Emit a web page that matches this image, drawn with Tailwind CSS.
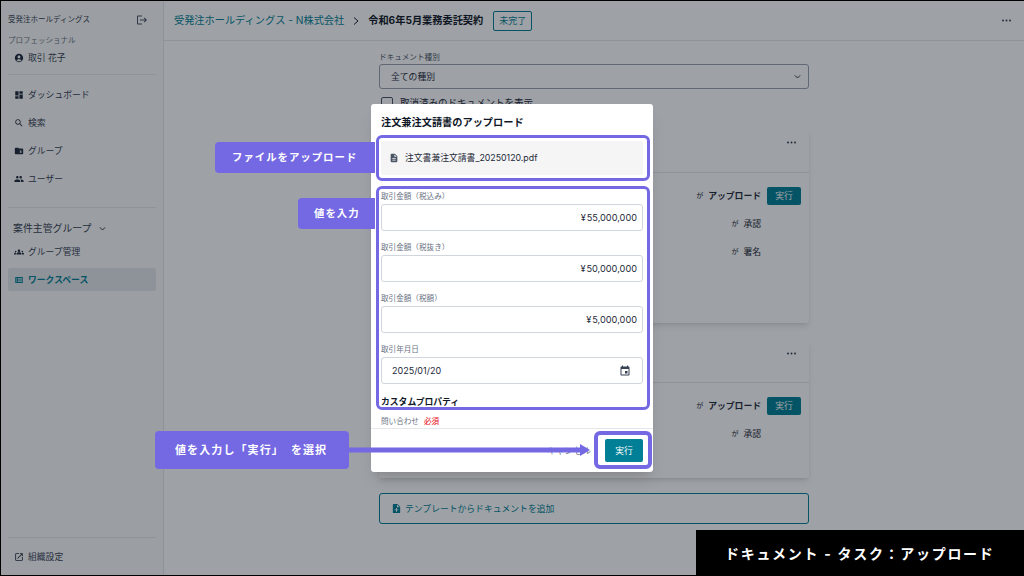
<!DOCTYPE html>
<html lang="ja">
<head>
    <meta charset="UTF-8">
    <title>ドキュメント - タスク：アップロード</title>
    <script src="https://cdn.jsdelivr.net/npm/@tailwindcss/browser@4"></script>
</head>
<body class="bg-black w-[1024px] h-[576px] overflow-hidden font-['Inter','Noto_Sans_CJK_JP',sans-serif] text-gray-800">
<div class="relative ml-[1px] mt-[1px] w-[1023px] h-[574px] bg-white flex overflow-hidden">

    <!-- サイドバー -->
    <aside class="w-[163px] shrink-0 bg-[#fbfbfb] border-r border-gray-200 flex flex-col px-[7px] text-[8.8px] text-gray-700">
        <div class="flex justify-between items-center h-[36px] pt-[1px] pr-[8px] text-[7.5px]">
            <span>受発注ホールディングス</span>
            <svg class="w-[12px] h-[12px] fill-gray-600" viewBox="0 0 24 24"><path d="M17 7l-1.41 1.41L18.17 11H8v2h10.17l-2.58 2.58L17 17l5-5zM4 5h8V3H4c-1.1 0-2 .9-2 2v14c0 1.1.9 2 2 2h8v-2H4V5z"/></svg>
        </div>
        <div class="text-[7.5px] text-gray-500 leading-[10px] mt-[-1px]">プロフェッショナル</div>
        <div class="flex items-center gap-[4px] px-[6px] border-b border-gray-200 pb-[5px] h-[29px]">
            <svg class="w-[10px] h-[10px] fill-gray-800" viewBox="0 0 24 24"><path d="M12 2C6.48 2 2 6.48 2 12s4.48 10 10 10 10-4.48 10-10S17.52 2 12 2zm0 4c1.93 0 3.5 1.57 3.5 3.5S13.93 13 12 13s-3.5-1.57-3.5-3.5S10.07 6 12 6zm0 14c-2.03 0-4.43-.82-6.14-2.88C7.55 15.8 9.68 15 12 15s4.45.8 6.14 2.12C16.43 19.18 14.03 20 12 20z"/></svg>
            <span>取引 花子</span>
        </div>
        <div class="mt-[6px] flex flex-col border-b border-gray-200 pb-[14px]">
            <div class="flex items-center gap-[4px] h-[28px] px-[6px]">
                <svg class="w-[10px] h-[10px] fill-gray-800" viewBox="0 0 24 24"><path d="M3 13h8V3H3v10zm0 8h8v-6H3v6zm10 0h8V11h-8v10zm0-18v6h8V3h-8z"/></svg>
                <span>ダッシュボード</span>
            </div>
            <div class="flex items-center gap-[4px] h-[28px] px-[6px]">
                <svg class="w-[10px] h-[10px] fill-gray-800" viewBox="0 0 24 24"><path d="M15.5 14h-.79l-.28-.27C15.41 12.59 16 11.11 16 9.5 16 5.91 13.09 3 9.5 3S3 5.91 3 9.5 5.91 16 9.5 16c1.61 0 3.09-.59 4.23-1.57l.27.28v.79l5 4.99L20.49 19l-4.99-5zm-6 0C7.01 14 5 11.99 5 9.5S7.01 5 9.5 5 14 7.01 14 9.5 11.99 14 9.5 14z"/></svg>
                <span>検索</span>
            </div>
            <div class="flex items-center gap-[4px] h-[28px] px-[6px]">
                <svg class="w-[10px] h-[10px] fill-gray-800" viewBox="0 0 24 24"><path fill-rule="evenodd" d="M10 4H4c-1.1 0-2 .9-2 2v12c0 1.1.9 2 2 2h16c1.1 0 2-.9 2-2V8c0-1.1-.9-2-2-2h-8l-2-2zm4 7h4v2h-4zm0 3h4v2h-4z"/></svg>
                <span>グループ</span>
            </div>
            <div class="flex items-center gap-[4px] h-[28px] px-[6px]">
                <svg class="w-[10px] h-[10px] fill-gray-800" viewBox="0 0 24 24"><path d="M16 11c1.66 0 2.99-1.34 2.99-3S17.66 5 16 5c-1.66 0-3 1.34-3 3s1.34 3 3 3zm-8 0c1.66 0 2.99-1.34 2.99-3S9.66 5 8 5C6.34 5 5 6.34 5 8s1.34 3 3 3zm0 2c-2.33 0-7 1.17-7 3.5V19h14v-2.5c0-2.33-4.67-3.5-7-3.5zm8 0c-.29 0-.62.02-.97.05 1.16.84 1.97 1.97 1.97 3.45V19h6v-2.5c0-2.33-4.67-3.5-7-3.5z"/></svg>
                <span>ユーザー</span>
            </div>
        </div>
        <div class="flex items-center gap-[7px] h-[20px] mt-[10px] px-[5px] text-[9.9px]">
            <span>案件主管グループ</span>
            <svg class="w-[9px] h-[9px] stroke-gray-800 fill-none" stroke-width="2.5" viewBox="0 0 24 24"><path d="M5 9l7 7 7-7"/></svg>
        </div>
        <div class="flex items-center gap-[4px] h-[28px] px-[6px] mb-[2px]">
            <svg class="w-[10px] h-[10px] fill-gray-800" viewBox="0 0 24 24"><path d="M4 13c1.1 0 2-.9 2-2 0-1.1-.9-2-2-2s-2 .9-2 2c0 1.1.9 2 2 2zm1.13 1.1c-.37-.06-.74-.1-1.13-.1-.99 0-1.93.21-2.78.58C.48 14.9 0 15.62 0 16.43V18h4.5v-1.61c0-.83.23-1.61.63-2.29zM20 13c1.1 0 2-.9 2-2 0-1.1-.9-2-2-2s-2 .9-2 2c0 1.1.9 2 2 2zm4 3.43c0-.81-.48-1.53-1.22-1.85-.85-.37-1.79-.58-2.78-.58-.39 0-.76.04-1.13.1.4.68.63 1.46.63 2.29V18H24v-1.57zm-7.76-2.78c-1.17-.52-2.61-.9-4.24-.9-1.63 0-3.07.39-4.24.9C6.68 14.13 6 15.21 6 16.39V18h12v-1.61c0-1.18-.68-2.26-1.76-2.74zM12 12c1.66 0 3-1.34 3-3s-1.34-3-3-3-3 1.34-3 3 1.34 3 3 3z"/></svg>
            <span>グループ管理</span>
        </div>
        <div class="flex items-center gap-[4px] h-[23px] px-[6px] rounded-[2px] bg-gray-200 font-bold text-[#007f96]">
            <svg class="w-[10px] h-[10px] fill-[#007f96]" viewBox="0 0 24 24"><path d="M3 5v14h18V5H3zm4 2v2H5V7h2zm-2 6v-2h2v2H5zm0 2h2v2H5v-2zm14 2H9v-2h10v2zm0-4H9v-2h10v2zm0-4H9V7h10v2z"/></svg>
            <span>ワークスペース</span>
        </div>
        <div class="mt-auto border-t border-gray-200 h-[38px] flex items-center gap-[4px] px-[6px]">
            <svg class="w-[10px] h-[10px] fill-gray-800" viewBox="0 0 24 24"><path d="M19 19H5V5h7V3H5c-1.11 0-2 .9-2 2v14c0 1.1.89 2 2 2h14c1.1 0 2-.9 2-2v-7h-2v7zM14 3v2h3.59l-9.83 9.83 1.41 1.41L19 6.41V10h2V3h-7z"/></svg>
            <span>組織設定</span>
        </div>
    </aside>

    <!-- メイン -->
    <main class="flex-1 flex flex-col">
        <header class="h-[40px] border-b border-gray-200 flex items-center pl-[10px] pr-[13px] text-[10.2px] shrink-0">
            <span class="text-[#007f96]">受発注ホールディングス - N株式会社</span>
            <svg class="w-[12px] h-[12px] mx-[6px] stroke-gray-900 fill-none" stroke-width="2" viewBox="0 0 24 24"><path d="M8 5l8 7-8 7"/></svg>
            <span class="font-bold text-gray-900">令和6年5月業務委託契約</span>
            <span class="ml-[10px] w-[39px] h-[20px] border border-[#007f96] rounded-[2px] text-[#007f96] text-[9px] flex items-center justify-center">未完了</span>
            <svg class="ml-auto w-[9px] h-[3px] fill-gray-700" viewBox="0 0 9 3"><circle cx="1" cy="1.5" r="1"/><circle cx="4.5" cy="1.5" r="1"/><circle cx="8" cy="1.5" r="1"/></svg>
        </header>
        <div class="w-[430px] mx-auto pt-[12px] flex flex-col">
            <label class="block text-[7.6px] text-gray-600 leading-[10px] mb-[1px]">ドキュメント種別</label>
            <div class="h-[25px] border border-gray-400 rounded-[3px] flex items-center justify-between pl-[11px] pr-[6px] text-[8.8px]">
                <span>全ての種別</span>
                <svg class="w-[9px] h-[9px] stroke-gray-800 fill-none" stroke-width="2.5" viewBox="0 0 24 24"><path d="M5 9l7 7 7-7"/></svg>
            </div>
            <div class="flex items-center gap-[7px] h-[14px] mt-[7px] ml-[2px] text-[9.5px]">
                <span class="w-[12px] h-[12px] border-[1.5px] border-gray-600 rounded-[2px]"></span>
                <span>取消済みのドキュメントを表示</span>
            </div>
            <section class="mt-[19px] h-[194px] rounded-[3px] bg-white shadow-md flex flex-col">
                <div class="h-[44px] border-b border-gray-200 flex justify-end pt-[12px] pr-[13px] shrink-0">
                    <svg class="w-[9px] h-[3px] fill-gray-700" viewBox="0 0 9 3"><circle cx="1" cy="1.5" r="1"/><circle cx="4.5" cy="1.5" r="1"/><circle cx="8" cy="1.5" r="1"/></svg>
                </div>
                <div class="pt-[14px] flex flex-col items-end pr-[8px] text-[8.8px]">
                    <div class="flex items-center h-[18px]"><span class="text-[7px] mr-[5px]">が</span><b>アップロード</b><span class="ml-[6px] w-[34px] h-[18px] rounded-[2px] bg-[#007f96] text-white flex items-center justify-center">実行</span></div>
                    <div class="flex items-center h-[18px] mt-[10px] mr-[40px]"><span class="text-[7px] mr-[5px]">が</span>承認</div>
                    <div class="flex items-center h-[18px] mt-[10px] mr-[40px]"><span class="text-[7px] mr-[5px]">が</span>署名</div>
                </div>
            </section>
            <section class="mt-[16px] h-[139px] rounded-[3px] bg-white shadow-md flex flex-col">
                <div class="h-[44px] border-b border-gray-200 flex justify-end pt-[13px] pr-[13px] shrink-0">
                    <svg class="w-[9px] h-[3px] fill-gray-700" viewBox="0 0 9 3"><circle cx="1" cy="1.5" r="1"/><circle cx="4.5" cy="1.5" r="1"/><circle cx="8" cy="1.5" r="1"/></svg>
                </div>
                <div class="pt-[14px] flex flex-col items-end pr-[8px] text-[8.8px]">
                    <div class="flex items-center h-[18px]"><span class="text-[7px] mr-[5px]">が</span><b>アップロード</b><span class="ml-[6px] w-[34px] h-[18px] rounded-[2px] bg-[#007f96] text-white flex items-center justify-center">実行</span></div>
                    <div class="flex items-center h-[18px] mt-[10px] mr-[40px]"><span class="text-[7px] mr-[5px]">が</span>承認</div>
                </div>
            </section>
            <div class="mt-[15px] h-[31px] border border-[#007f96] rounded-[3px] flex items-center gap-[3px] px-[11px] text-[8.8px] text-[#007f96]">
                <svg class="w-[11px] h-[11px] fill-[#007f96]" viewBox="0 0 24 24"><path d="M14 2H6c-1.1 0-1.99.9-1.99 2L4 20c0 1.1.89 2 1.99 2H18c1.1 0 2-.9 2-2V8l-6-6zm2 14h-3v3h-2v-3H8v-2h3v-3h2v3h3v2zm-3-7V3.5L18.5 9H13z"/></svg>
                <span>テンプレートからドキュメントを追加</span>
            </div>
        </div>
    </main>

    <!-- オーバーレイ -->
    <div class="absolute inset-0 bg-[#0c141e]/40"></div>

    <!-- モーダル -->
    <div class="absolute left-[370px] top-[103px] w-[282px] h-[368px] bg-white rounded-[3px] shadow-lg flex flex-col">
        <h3 class="px-[10px] pt-[11px] h-[37px] shrink-0 text-[10.2px] font-bold text-gray-900 leading-[14px]">注文兼注文請書のアップロード</h3>
        <div class="flex-1 overflow-hidden px-[10px]">
            <div class="h-[34px] bg-[#f5f5f5] rounded-[2px] flex items-center gap-[6px] px-[8px] text-[8.8px]">
                <svg class="w-[10px] h-[10px] fill-gray-600" viewBox="0 0 24 24"><path d="M14 2H6c-1.1 0-1.99.9-1.99 2L4 20c0 1.1.89 2 1.99 2H18c1.1 0 2-.9 2-2V8l-6-6zm2 16H8v-2h8v2zm0-4H8v-2h8v2zm-3-5V3.5L18.5 9H13z"/></svg>
                <span>注文書兼注文請書_20250120.pdf</span>
            </div>
            <div class="mt-[17px] flex flex-col">
                <label class="text-[7.6px] text-gray-500 leading-[10px] mb-[2px]">取引金額（税込み）</label>
                <div class="h-[27px] border border-gray-300 rounded-[3px] flex items-center justify-end px-[5px] text-[9.2px]"><span class="mr-[1px]">¥</span>55,000,000</div>
                <label class="text-[7.6px] text-gray-500 leading-[10px] mt-[12px] mb-[2px]">取引金額（税抜き）</label>
                <div class="h-[27px] border border-gray-300 rounded-[3px] flex items-center justify-end px-[5px] text-[9.2px]"><span class="mr-[1px]">¥</span>50,000,000</div>
                <label class="text-[7.6px] text-gray-500 leading-[10px] mt-[12px] mb-[2px]">取引金額（税額）</label>
                <div class="h-[27px] border border-gray-300 rounded-[3px] flex items-center justify-end px-[5px] text-[9.2px]"><span class="mr-[1px]">¥</span>5,000,000</div>
                <label class="text-[7.6px] text-gray-500 leading-[10px] mt-[12px] mb-[2px]">取引年月日</label>
                <div class="h-[27px] border border-gray-300 rounded-[3px] flex items-center justify-between pl-[10px] pr-[11px] text-[9px]">
                    <span>2025/01/20</span>
                    <svg class="w-[12px] h-[12px] fill-gray-700" viewBox="0 0 24 24"><path d="M17 12h-5v5h5v-5zM16 1v2H8V1H6v2H5c-1.11 0-1.99.9-1.99 2L3 19c0 1.1.89 2 2 2h14c1.1 0 2-.9 2-2V5c0-1.1-.9-2-2-2h-1V1h-2zm3 18H5V8h14v11z"/></svg>
                </div>
                <div class="mt-[11px] text-[8.8px] font-bold text-gray-900 leading-[14px]">カスタムプロパティ</div>
                <div class="mt-[8px] text-[7.6px] text-gray-500 leading-[10px]">問い合わせ<span class="ml-[5px] text-red-600">必須</span></div>
            </div>
        </div>
        <div class="h-[44px] shrink-0 border-t border-gray-200 flex items-center justify-end gap-[14px] pr-[10px] text-[8.8px]">
            <span class="text-gray-500">キャンセル</span>
            <span class="w-[38px] h-[23px] rounded-[2px] bg-[#007f96] text-white flex items-center justify-center">実行</span>
        </div>
    </div>

    <!-- 注釈 -->
    <div class="absolute left-[214px] top-[141px] w-[160px] h-[31px] bg-[#7469e3] rounded-l-[4px] flex items-center pl-[17px] text-white font-bold text-[10.4px] tracking-[1px]">ファイルをアップロード</div>
    <div class="absolute left-[297px] top-[197px] w-[77px] h-[31px] bg-[#7469e3] rounded-l-[4px] flex items-center pl-[16px] text-white font-bold text-[10.4px] tracking-[1px]">値を入力</div>
    <div class="absolute left-[375px] top-[134px] w-[274px] h-[46px] border-[3px] border-[#7469e3] rounded-[6px]"></div>
    <div class="absolute left-[375px] top-[185px] w-[274px] h-[224px] border-[3px] border-[#7469e3] rounded-[6px]"></div>
    <div class="absolute left-[154px] top-[430px] w-[194px] h-[38px] bg-[#7469e3] rounded-[4px] flex items-center pl-[20px] text-white font-bold text-[11px] tracking-[1.1px]">値を入力し「実行」<span class="ml-[7px]">を選択</span></div>
    <svg class="absolute left-[348px] top-[442px] w-[242px] h-[14px]" viewBox="0 0 242 14"><path d="M0 4.5h231V1l10 6-10 6V9.5H0z" fill="#7469e3"/></svg>
    <div class="absolute left-[593px] top-[430px] w-[58px] h-[38px] border-[4px] border-[#7469e3] rounded-[6px]"></div>

    <!-- キャプション -->
    <div class="absolute right-0 bottom-[-1px] w-[328px] h-[46px] bg-black text-white flex items-center pl-[29px] text-[14px] font-bold tracking-[1.7px]">ドキュメント - タスク：アップロード</div>
</div>
</body>
</html>
